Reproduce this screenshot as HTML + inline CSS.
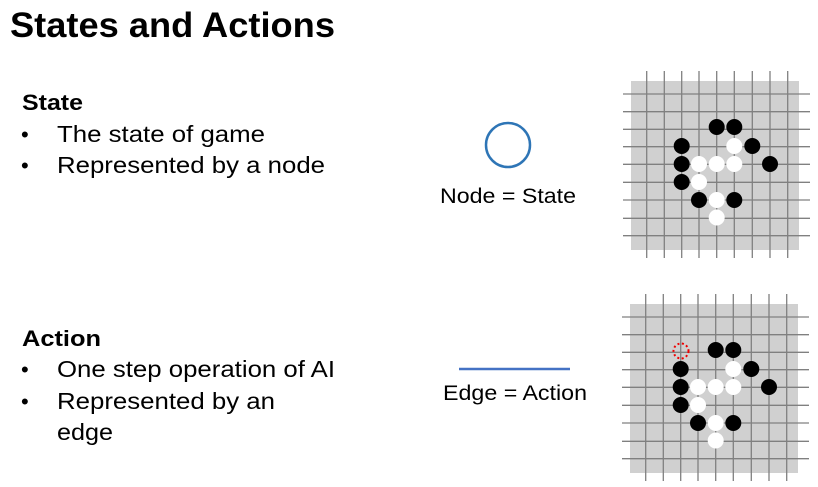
<!DOCTYPE html>
<html><head><meta charset="utf-8"><style>
html,body{margin:0;padding:0;background:#fff;width:818px;height:487px;overflow:hidden}
svg{display:block;font-family:"Liberation Sans",Arial,sans-serif}
</style></head><body>
<svg width="818" height="487" viewBox="0 0 818 487" xmlns="http://www.w3.org/2000/svg">
<text x="10" y="37" font-size="35" font-weight="bold" fill="#000" textLength="325" lengthAdjust="spacingAndGlyphs">States and Actions</text>
<text x="22" y="110" font-size="22.5" font-weight="bold" textLength="61" lengthAdjust="spacingAndGlyphs">State</text>
<text x="21" y="142" font-size="22">•</text>
<text x="57" y="142" font-size="23" textLength="208" lengthAdjust="spacingAndGlyphs">The state of game</text>
<text x="21" y="173" font-size="22">•</text>
<text x="57" y="173" font-size="23" textLength="268" lengthAdjust="spacingAndGlyphs">Represented by a node</text>
<text x="22" y="346" font-size="22.5" font-weight="bold" textLength="79" lengthAdjust="spacingAndGlyphs">Action</text>
<text x="21" y="377" font-size="22">•</text>
<text x="57" y="377" font-size="23" textLength="278" lengthAdjust="spacingAndGlyphs">One step operation of AI</text>
<text x="21" y="409" font-size="22">•</text>
<text x="57" y="409" font-size="23" textLength="218" lengthAdjust="spacingAndGlyphs">Represented by an</text>
<text x="57" y="440" font-size="23" textLength="56" lengthAdjust="spacingAndGlyphs">edge</text>

<circle cx="508" cy="145" r="22" fill="none" stroke="#2e75b6" stroke-width="2.5"/>
<text x="440" y="203" font-size="21" textLength="136" lengthAdjust="spacingAndGlyphs">Node = State</text>
<line x1="459" y1="369" x2="570" y2="369" stroke="#4472c4" stroke-width="2.5"/>
<text x="443" y="400" font-size="21" textLength="144" lengthAdjust="spacingAndGlyphs">Edge = Action</text>

<g id="b1">
<rect x="631" y="81" width="168" height="169" fill="#d0d0d0"/>
<g stroke="#808080" stroke-width="1.3">
<line x1="646.7" y1="71" x2="646.7" y2="258"/><line x1="664.3" y1="71" x2="664.3" y2="258"/>
<line x1="681.7" y1="71" x2="681.7" y2="258"/><line x1="699" y1="71" x2="699" y2="258"/>
<line x1="716.7" y1="71" x2="716.7" y2="258"/><line x1="734.3" y1="71" x2="734.3" y2="258"/>
<line x1="752.3" y1="71" x2="752.3" y2="258"/><line x1="770" y1="71" x2="770" y2="258"/>
<line x1="787.7" y1="71" x2="787.7" y2="258"/>
<line x1="623" y1="94" x2="810" y2="94"/><line x1="623" y1="111.7" x2="810" y2="111.7"/>
<line x1="623" y1="129.3" x2="810" y2="129.3"/><line x1="623" y1="146.7" x2="810" y2="146.7"/>
<line x1="623" y1="164.3" x2="810" y2="164.3"/><line x1="623" y1="182.3" x2="810" y2="182.3"/>
<line x1="623" y1="200" x2="810" y2="200"/><line x1="623" y1="218.3" x2="810" y2="218.3"/>
<line x1="623" y1="235.7" x2="810" y2="235.7"/>
</g>
<g fill="#000">
<circle cx="716.7" cy="127" r="8"/><circle cx="734.3" cy="127" r="8"/>
<circle cx="681.7" cy="146" r="8"/><circle cx="752.3" cy="146" r="8"/>
<circle cx="681.7" cy="164" r="8"/><circle cx="770" cy="164" r="8"/>
<circle cx="681.7" cy="182" r="8"/>
<circle cx="699" cy="200" r="8"/><circle cx="734.3" cy="200" r="8"/>
</g>
<g fill="#fff">
<circle cx="734.3" cy="146" r="8"/>
<circle cx="699" cy="164" r="8"/><circle cx="716.7" cy="164" r="8"/><circle cx="734.3" cy="164" r="8"/>
<circle cx="699" cy="182" r="8"/>
<circle cx="716.7" cy="200" r="8"/>
<circle cx="716.7" cy="217.5" r="8"/>
</g>
</g>
<use href="#b1" transform="translate(-1,223)"/>
<circle cx="681" cy="351" r="7.5" fill="none" stroke="#e00" stroke-width="2" stroke-dasharray="2 2.5"/>
</svg>
</body></html>
